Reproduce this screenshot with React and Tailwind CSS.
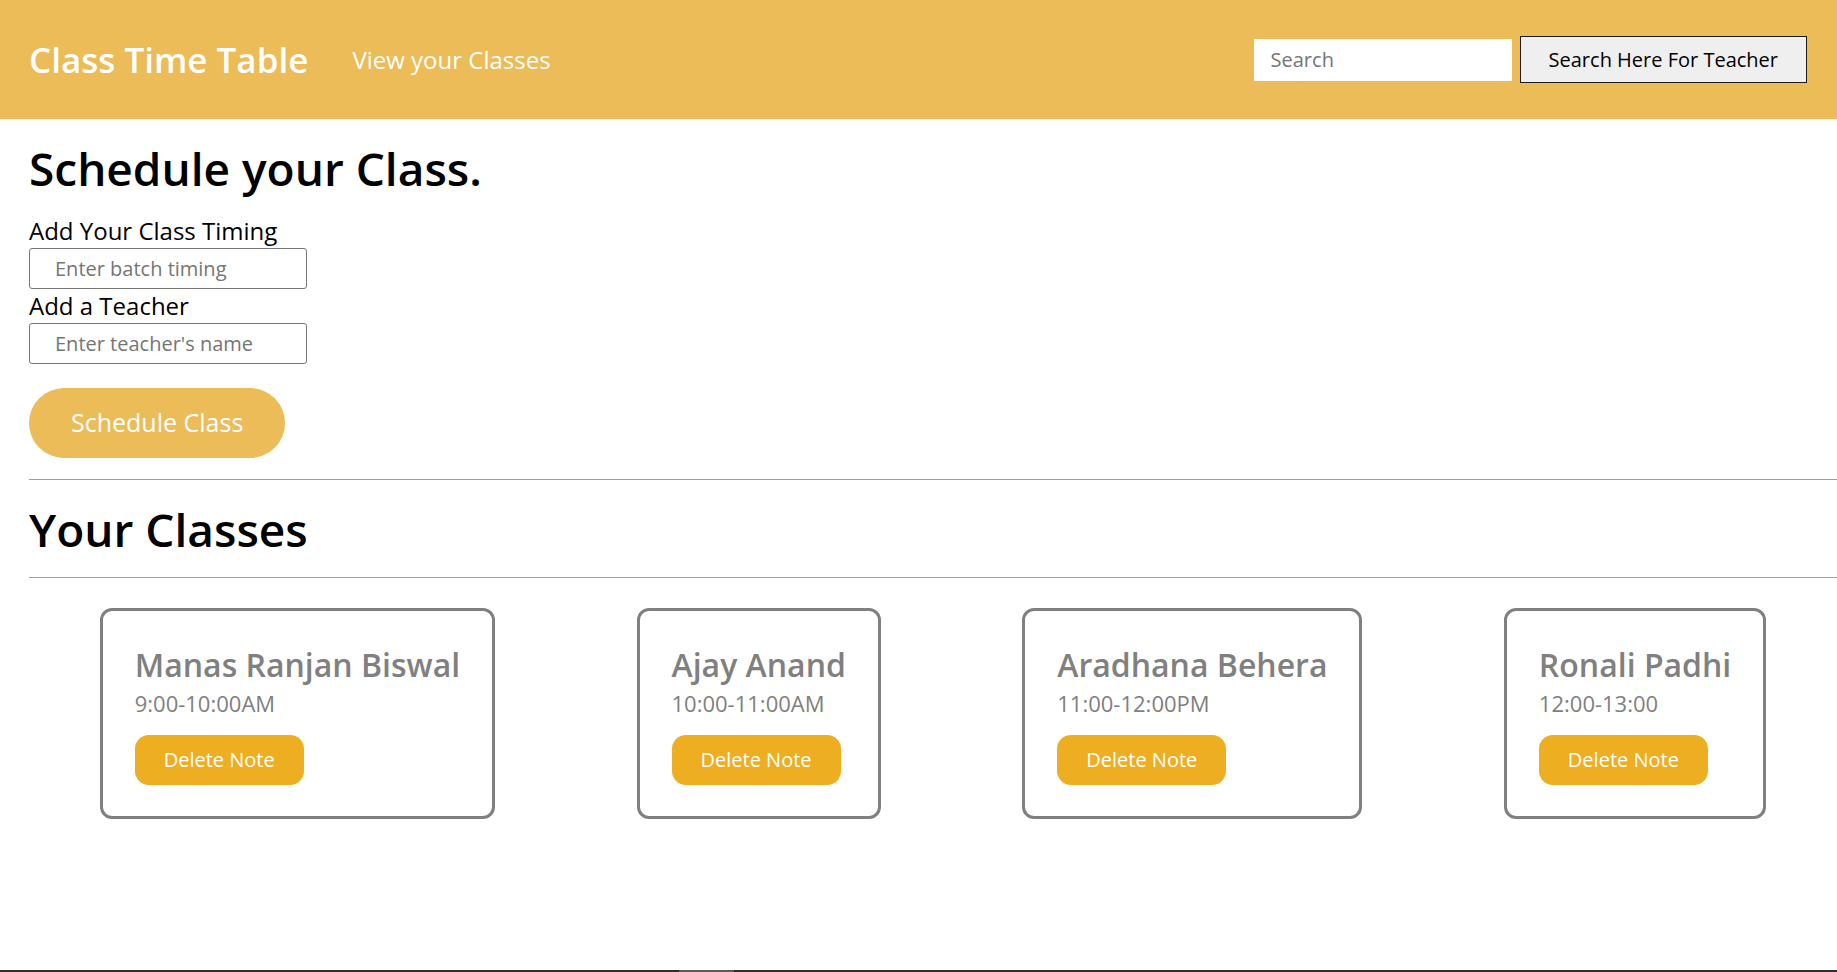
import React from 'react';

const classes = [
  { name: 'Manas Ranjan Biswal', time: '9:00-10:00AM' },
  { name: 'Ajay Anand', time: '10:00-11:00AM' },
  { name: 'Aradhana Behera', time: '11:00-12:00PM' },
  { name: 'Ronali Padhi', time: '12:00-13:00' },
];

// Navbar
const Navbar = () => (
  <nav className="h-[119px] bg-[#ebbc58] flex items-center justify-between pl-[29px] pr-[30px]">
    <div className="flex items-center gap-[44px]">
      <h1 className="text-[35px] font-semibold text-white leading-[46px]">Class Time Table</h1>
      <a className="text-[24px] text-white leading-[32px]">View your Classes</a>
    </div>
    <div className="flex items-center gap-[8px]">
      <input
        type="text"
        placeholder="Search"
        className="w-[258px] h-[42px] bg-white pl-[17px] text-[20px] placeholder-[#757575] outline-none"
      />
      <button className="h-[47px] px-[28px] bg-[#efefef] border border-[#1a1a1a] text-[20px] text-black">
        Search Here For Teacher
      </button>
    </div>
  </nav>
);

const ClassCard = ({ name, time }) => (
  <div className="border-[3px] border-[#808080] rounded-[12px] pt-[33px] pb-[31px] px-[32px]">
    <h2 className="text-[32px] font-semibold text-[#808080] leading-[42px] whitespace-nowrap">{name}</h2>
    <p className="mt-[2px] text-[22px] text-[#808080] leading-[30px]">{time}</p>
    <button className="mt-[17px] h-[50px] px-[29px] rounded-[14px] bg-[#eeae22] text-white text-[20px]">
      Delete Note
    </button>
  </div>
);

export default function App() {
  return (
    <div className="min-h-screen flex flex-col bg-white font-['Open_Sans',sans-serif]">
      <Navbar />
      <main className="flex-1 pl-[29px]">
        {/* Schedule form */}
        <h1 className="mt-[21px] text-[46px] font-semibold text-black leading-[56px]">Schedule your Class.</h1>
        <label className="block mt-[20px] text-[24px] text-black leading-[30px]">Add Your Class Timing</label>
        <input
          type="text"
          placeholder="Enter batch timing"
          className="block mt-[2px] w-[278px] h-[41px] border border-[#767676] rounded-[3px] pl-[25px] text-[20px] placeholder-[#757575] outline-none"
        />
        <label className="block mt-[2px] text-[24px] text-black leading-[30px]">Add a Teacher</label>
        <input
          type="text"
          placeholder="Enter teacher's name"
          className="block mt-[2px] w-[278px] h-[41px] border border-[#767676] rounded-[3px] pl-[25px] text-[20px] placeholder-[#757575] outline-none"
        />
        <button className="mt-[24px] h-[70px] px-[42px] rounded-full bg-[#ebbc58] text-white text-[25px]">
          Schedule Class
        </button>

        <hr className="mt-[21px] border-t border-[#a0a0a0]" />
        <h1 className="mt-[20px] text-[46px] font-semibold text-black leading-[58px]">Your Classes</h1>
        <hr className="mt-[19px] border-t border-[#a0a0a0]" />

        {/* Cards */}
        <div className="mt-[30px] flex justify-around items-start">
          {classes.map((c, i) => (
            <ClassCard key={i} name={c.name} time={c.time} />
          ))}
        </div>
      </main>
      <div className="h-[2px] bg-[#2e2e2e] flex">
        <div className="w-[679px]" />
        <div className="w-[55px] bg-[#5a5a5a]" />
      </div>
    </div>
  );
}
